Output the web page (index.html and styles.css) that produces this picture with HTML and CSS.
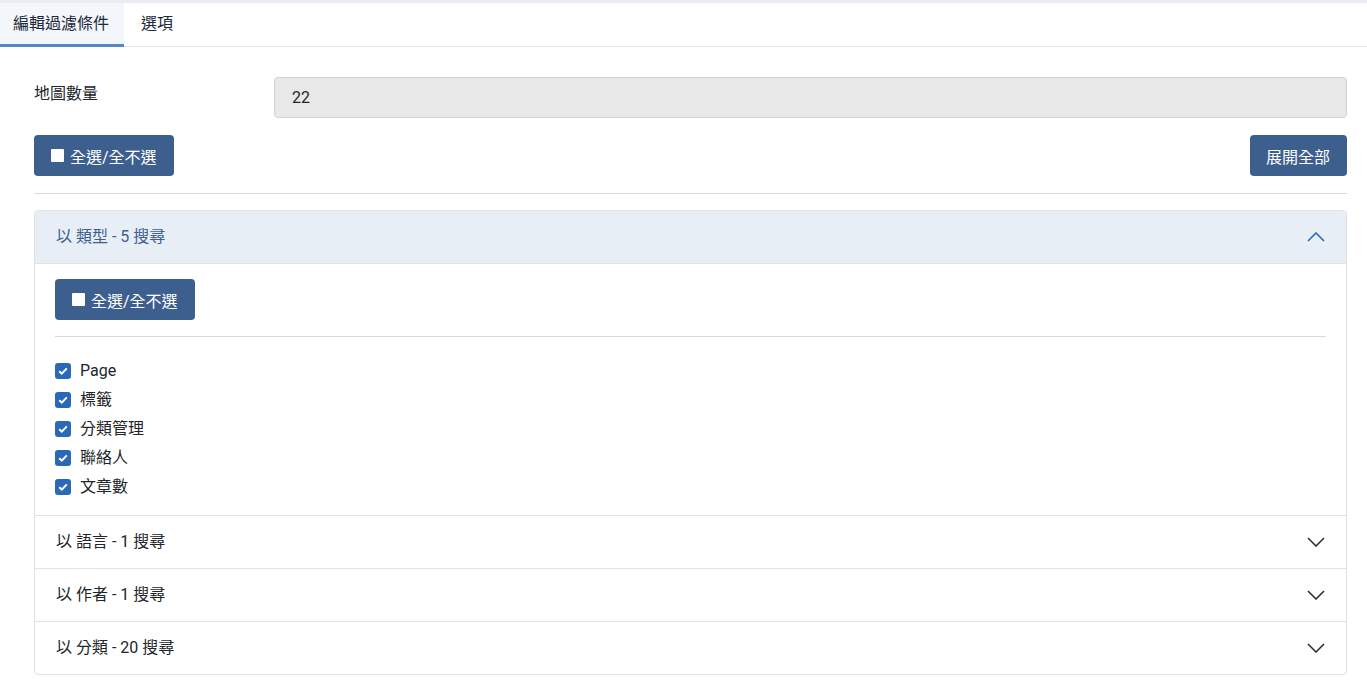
FILE: index.html
```html
<!DOCTYPE html>
<html>

<head>
	<title>編輯過濾條件</title>
	<link rel="stylesheet" href="styles.css">
</head>

<body>
	<div class="topbar"></div>
	<div class="tabs">
		<div class="tab active">編輯過濾條件</div>
		<div class="tab">選項</div>
	</div>

	<div class="content">
		<div class="field">
			<label class="field-label">地圖數量</label>
			<div class="field-input">22</div>
		</div>

		<div class="toolbar">
			<button class="btn"><span class="box"></span>全選/全不選</button>
			<button class="btn">展開全部</button>
		</div>

		<hr class="sep">

		<div class="accordion">
			<div class="acc-item open">
				<div class="acc-head">
					<span>以 類型 - 5 搜尋</span>
					<svg class="chev" width="18" height="10" viewBox="0 0 18 10"><path d="M1 9 L9 1 L17 9" fill="none" stroke="currentColor" stroke-width="1.6"/></svg>
				</div>
				<div class="acc-body">
					<button class="btn"><span class="box"></span>全選/全不選</button>
					<hr class="sep inner">
					<ul class="checks">
						<li><span class="check"><svg width="10" height="8" viewBox="0 0 10 8"><path d="M1.2 4.2 L3.8 6.6 L8.8 1.4" fill="none" stroke="#fff" stroke-width="2"/></svg></span>Page</li>
						<li><span class="check"><svg width="10" height="8" viewBox="0 0 10 8"><path d="M1.2 4.2 L3.8 6.6 L8.8 1.4" fill="none" stroke="#fff" stroke-width="2"/></svg></span>標籤</li>
						<li><span class="check"><svg width="10" height="8" viewBox="0 0 10 8"><path d="M1.2 4.2 L3.8 6.6 L8.8 1.4" fill="none" stroke="#fff" stroke-width="2"/></svg></span>分類管理</li>
						<li><span class="check"><svg width="10" height="8" viewBox="0 0 10 8"><path d="M1.2 4.2 L3.8 6.6 L8.8 1.4" fill="none" stroke="#fff" stroke-width="2"/></svg></span>聯絡人</li>
						<li><span class="check"><svg width="10" height="8" viewBox="0 0 10 8"><path d="M1.2 4.2 L3.8 6.6 L8.8 1.4" fill="none" stroke="#fff" stroke-width="2"/></svg></span>文章數</li>
					</ul>
				</div>
			</div>
			<div class="acc-item">
				<div class="acc-head">
					<span>以 語言 - 1 搜尋</span>
					<svg class="chev" width="18" height="10" viewBox="0 0 18 10"><path d="M1 1 L9 9 L17 1" fill="none" stroke="currentColor" stroke-width="1.6"/></svg>
				</div>
			</div>
			<div class="acc-item">
				<div class="acc-head">
					<span>以 作者 - 1 搜尋</span>
					<svg class="chev" width="18" height="10" viewBox="0 0 18 10"><path d="M1 1 L9 9 L17 1" fill="none" stroke="currentColor" stroke-width="1.6"/></svg>
				</div>
			</div>
			<div class="acc-item">
				<div class="acc-head">
					<span>以 分類 - 20 搜尋</span>
					<svg class="chev" width="18" height="10" viewBox="0 0 18 10"><path d="M1 1 L9 9 L17 1" fill="none" stroke="currentColor" stroke-width="1.6"/></svg>
				</div>
			</div>
		</div>
	</div>
</body>

</html>
```

FILE: styles.css
```css
:root {
	--primary: #3c5f8e;
	--accent: #2a69b8;
	--text: #22262a;
	--border: #dfe3e7;
	--head-bg: #e8eef6;
}

body {
	margin: 0;
	padding: 0;
	background: #fff;
	color: var(--text);
	font-family: Roboto, 'Noto Sans CJK TC', sans-serif;
	font-size: 16px;
	line-height: 1.5;
}

.topbar {
	height: 3px;
	background: #e8edf4;
}

.tabs {
	display: flex;
	height: 43px;
	border-bottom: 1px solid #dbe3ee;
}

.tab {
	display: flex;
	align-items: center;
	padding: 0 15px 0 17px;
	font-size: 16px;
	color: #1d2a3c;
	border-bottom: 3px solid transparent;
	margin-bottom: -1px;
}

.tab.active {
	padding-left: 13px;
	background: #f3f6fa;
	border-bottom-color: #5887c6;
}

.content {
	padding: 30px 20px 0 34px;
}

.field {
	display: grid;
	grid-template-columns: 240px 1fr;
	align-items: start;
}

.field-label {
	padding-top: 5px;
}

.field-input {
	height: 39px;
	line-height: 39px;
	padding: 0 17px;
	background: #e8e8e8;
	border: 1px solid #c8d3e2;
	border-radius: 4px;
}

.toolbar {
	display: flex;
	justify-content: space-between;
	margin-top: 17px;
}

.btn {
	display: inline-flex;
	align-items: center;
	gap: 6px;
	height: 41px;
	padding: 0 17px;
	background: var(--primary);
	color: #fff;
	border: none;
	border-radius: 4px;
	font-family: inherit;
	font-size: 16px;
	cursor: pointer;
}

.toolbar .btn:last-child {
	padding: 0 17px 0 16px;
}

.box {
	width: 13px;
	height: 13px;
	background: #fff;
	border-radius: 1px;
}

.sep {
	border: none;
	border-top: 1px solid #d6d9dd;
	margin: 17px 0 16px;
}

.sep.inner {
	margin: 16px 0 19px;
}

.accordion {
	border: 1px solid var(--border);
	border-radius: 4px;
	overflow: hidden;
}

.acc-item + .acc-item {
	border-top: 1px solid var(--border);
}

.acc-head {
	display: flex;
	justify-content: space-between;
	align-items: center;
	height: 52px;
	padding: 0 21px;
	color: var(--text);
}

.acc-item.open .acc-head {
	background: var(--head-bg);
	color: var(--primary);
	border-bottom: 1px solid var(--border);
}

.chev {
	color: #2c2f33;
}

.acc-item.open .chev {
	color: var(--accent);
}

.acc-body {
	padding: 15px 20px 14px;
}

.checks {
	list-style: none;
	margin: 0;
	padding: 0;
}

.checks li {
	display: flex;
	align-items: center;
	gap: 9px;
	height: 29px;
	line-height: 29px;
}

.check {
	display: flex;
	align-items: center;
	justify-content: center;
	width: 16px;
	height: 16px;
	background: var(--accent);
	border-radius: 3px;
}
```
